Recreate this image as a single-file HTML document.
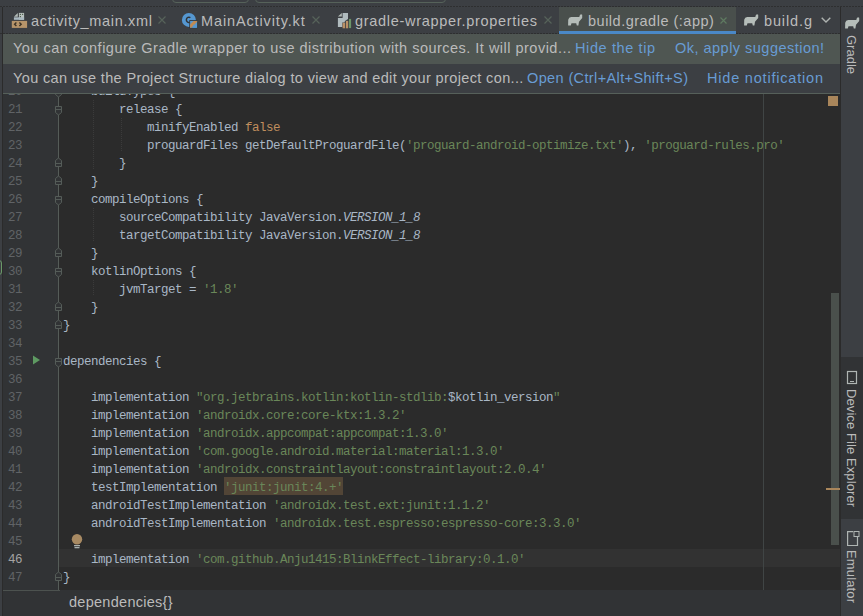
<!DOCTYPE html>
<html><head><meta charset="utf-8">
<style>
html,body{margin:0;padding:0;}
body{width:863px;height:616px;overflow:hidden;position:relative;background:#3C3F43;}
.a{position:absolute;}
.ui{position:absolute;font-family:"Liberation Sans",sans-serif;font-size:14.5px;white-space:pre;line-height:17px;color:#BBBBBB;}
.lk{color:#689CD4}
.code{position:absolute;left:63px;font-family:"Liberation Mono",monospace;font-size:12.5px;letter-spacing:-0.5px;line-height:18px;white-space:pre;color:#A9B7C6;}
.ln{position:absolute;left:0;width:22px;text-align:right;font-family:"Liberation Mono",monospace;font-size:12.5px;letter-spacing:-0.5px;line-height:18px;color:#606366;}
.k{color:#C08E5E}
.s{color:#6A8759}
.i{font-style:italic}
.vt{position:absolute;font-family:"Liberation Sans",sans-serif;font-size:13px;white-space:pre;line-height:15px;color:#BBBBBB;transform-origin:0 0;transform:rotate(90deg);}
svg{position:absolute;overflow:visible}
</style></head><body>

<div class="a" style="left:172px;top:-8px;width:75px;height:9px;border:1px solid #56625A;border-radius:4px"></div>
<div class="a" style="left:255px;top:-8px;width:189px;height:9px;border:1px solid #56625A;border-radius:4px"></div>
<div class="a" style="left:0;top:6px;width:863px;height:1px;background:repeating-linear-gradient(90deg,#2E2F30 0,#2E2F30 2px,transparent 2px,transparent 3px)"></div>
<div class="a" style="left:559px;top:7px;width:177px;height:24px;background:#494F4C"></div>
<div class="a" style="left:559px;top:31px;width:177px;height:3px;background:#4A88C7"></div>
<div class="a" style="left:0;top:33px;width:559px;height:1px;background:repeating-linear-gradient(90deg,#2E2F30 0,#2E2F30 2px,transparent 2px,transparent 3px)"></div>
<div class="a" style="left:736px;top:33px;width:104px;height:1px;background:repeating-linear-gradient(90deg,#2E2F30 0,#2E2F30 2px,transparent 2px,transparent 3px)"></div>
<div class="ui" style="left:31px;top:13px;letter-spacing:0.66px">activity_main.xml</div>
<div class="ui" style="left:201px;top:13px;letter-spacing:0.87px">MainActivity.kt</div>
<div class="ui" style="left:355px;top:13px;letter-spacing:0.70px">gradle-wrapper.properties</div>
<div class="ui" style="left:588px;top:13px;letter-spacing:0.5px">build.gradle (:app)</div>
<div class="ui" style="left:764px;top:13px;letter-spacing:0.87px">build.g</div>
<svg style="left:158px;top:16px" width="8" height="8"><path d="M0.5,0.5 L7.5,7.5 M7.5,0.5 L0.5,7.5" stroke="#56625A" stroke-width="1.2" fill="none"/></svg>
<svg style="left:312px;top:16px" width="8" height="8"><path d="M0.5,0.5 L7.5,7.5 M7.5,0.5 L0.5,7.5" stroke="#56625A" stroke-width="1.2" fill="none"/></svg>
<svg style="left:544px;top:16px" width="8" height="8"><path d="M0.5,0.5 L7.5,7.5 M7.5,0.5 L0.5,7.5" stroke="#56625A" stroke-width="1.2" fill="none"/></svg>
<svg style="left:720px;top:17px" width="7" height="7"><path d="M0.5,0.5 L6.5,6.5 M6.5,0.5 L0.5,6.5" stroke="#5E7A60" stroke-width="1.2" fill="none"/></svg>
<svg style="left:821px;top:17px" width="10" height="6"><path d="M0.7,0.7 L5,5 L9.3,0.7" stroke="#AEB3B0" stroke-width="1.4" fill="none"/></svg>
<svg style="left:11px;top:12px" width="17" height="17">
<path d="M2.9,4.8 L6.8,1 L6.8,4.8 Z" fill="#B3BCB8"/>
<rect x="7.9" y="0.9" width="5.2" height="6.9" fill="#B8C0BD"/>
<rect x="2.9" y="5.3" width="10.2" height="2.5" fill="#AAB8C0"/>
<rect x="8.8" y="1.8" width="1.2" height="1.2" fill="#50624F"/><rect x="11" y="1.8" width="1.2" height="1.2" fill="#50624F"/>
<rect x="8.8" y="4" width="1.2" height="1.2" fill="#50624F"/>
<rect x="0.8" y="8.9" width="15.3" height="7" fill="#B6946A"/>
<path d="M5.4,10.4 L3.6,12.2 L5.4,14 M8.4,10.4 L10.2,12.2 L8.4,14" stroke="#3E3426" stroke-width="1.4" fill="none"/>
</svg>
<svg style="left:181px;top:12px" width="17" height="17">
<circle cx="7.9" cy="7.9" r="7" fill="#5597D0"/>
<path d="M9.4,5.6 A2.6,2.6 0 1 0 8.6,10.3" stroke="#2F3236" stroke-width="1.5" fill="none"/>
<rect x="8.3" y="8.1" width="8" height="8.2" fill="#2F3236"/>
<path d="M9.1,8.9 L16.1,8.9 L16.1,15.8 L9.1,15.8 Z" fill="#5597D0"/>
<path d="M9.1,12.4 L12.6,8.9 L16.1,8.9 L16.1,9.8 L10.4,15.8 L9.1,15.8 Z" fill="#C08A52"/>
<path d="M12.8,12.4 L16.1,15.8 L11.2,15.8 Z" fill="#5597D0"/>
</svg>
<svg style="left:337px;top:12px" width="16" height="17">
<path d="M0.9,4.4 L4.8,0.9 L4.8,4.4 Z" fill="#B3BCB8"/>
<path d="M5.6,0.9 L11,0.9 L11,7 L8,9 L7.5,10.5 L5.3,10.5 L5.3,15.1 L0.9,15.1 L0.9,6 L5.6,6 Z" fill="#B0BBBE"/>
<rect x="5.6" y="10.8" width="2.5" height="5.5" fill="#B99066"/>
<rect x="8.9" y="8.9" width="2.3" height="7.4" fill="#B99066"/>
<rect x="12" y="6.9" width="2.1" height="9.2" fill="#6C9568"/>
</svg>
<svg style="left:567px;top:13px" width="16" height="13"><path d="M1.1,12.6 L1.2,6.8 Q1.8,4.2 4.2,4 L12.3,4 L12.9,2 L14,1.3 L15.2,1.8 L15.2,5 L12,8.8 L11.4,12.6 L9.8,12.6 L9.2,10.2 L4.5,10.2 L3.8,12.6 Z" fill="#B5BDB9"/></svg>
<svg style="left:743px;top:13px" width="16" height="13"><path d="M1.1,12.6 L1.2,6.8 Q1.8,4.2 4.2,4 L12.3,4 L12.9,2 L14,1.3 L15.2,1.8 L15.2,5 L12,8.8 L11.4,12.6 L9.8,12.6 L9.2,10.2 L4.5,10.2 L3.8,12.6 Z" fill="#B5BDB9"/></svg>
<div class="a" style="left:3px;top:34px;width:837px;height:30px;background:#4F5652"></div>
<div class="a" style="left:3px;top:64px;width:837px;height:29px;background:#3C3F43"></div>
<div class="a" style="left:3px;top:93px;width:837px;height:1px;background:#56605A"></div>
<div class="ui" style="left:13px;top:40px;letter-spacing:0.485px">You can configure Gradle wrapper to use distribution with sources. It will provid...</div>
<div class="ui lk" style="left:575px;top:40px;letter-spacing:0.61px">Hide the tip</div>
<div class="ui lk" style="left:675px;top:40px;letter-spacing:0.48px">Ok, apply suggestion!</div>
<div class="ui" style="left:13px;top:70px;letter-spacing:0.37px">You can use the Project Structure dialog to view and edit your project con...</div>
<div class="ui lk" style="left:527px;top:70px;letter-spacing:0.376px">Open (Ctrl+Alt+Shift+S)</div>
<div class="ui lk" style="left:707px;top:70px;letter-spacing:0.8px">Hide notification</div>
<div class="a" style="left:2px;top:7px;width:1px;height:609px;background:#2B2B2B"></div>
<div class="a" style="left:0;top:94px;width:840px;height:496px;overflow:hidden">
<div class="a" style="left:3px;top:0;width:55px;height:496px;background:#313335"></div>
<div class="a" style="left:59px;top:0;width:781px;height:496px;background:#2B2B2B"></div>
<div class="a" style="left:59px;top:455px;width:781px;height:18px;background:#323232"></div>
<div class="a" style="left:763px;top:0;width:1px;height:496px;background:#404545"></div>
<div class="a" style="left:93px;top:6px;width:0;height:69px;border-left:1px dotted #3B3B3B"></div>
<div class="a" style="left:121px;top:24px;width:0;height:33px;border-left:1px dotted #3B3B3B"></div>
<div class="a" style="left:93px;top:114px;width:0;height:33px;border-left:1px dotted #3B3B3B"></div>
<div class="a" style="left:93px;top:186px;width:0;height:15px;border-left:1px dotted #3B3B3B"></div>
<div class="a" style="left:224px;top:383px;width:119px;height:18px;background:#524536"></div>
<div class="code" style="top:-11px">    buildTypes {</div>
<div class="ln" style="top:-11px">20</div>
<div class="code" style="top:7px">        release {</div>
<div class="ln" style="top:7px">21</div>
<div class="code" style="top:25px">            minifyEnabled <span class="k">false</span></div>
<div class="ln" style="top:25px">22</div>
<div class="code" style="top:43px">            proguardFiles getDefaultProguardFile(<span class="s">&#x27;proguard-android-optimize.txt&#x27;</span>), <span class="s">&#x27;proguard-rules.pro&#x27;</span></div>
<div class="ln" style="top:43px">23</div>
<div class="code" style="top:61px">        }</div>
<div class="ln" style="top:61px">24</div>
<div class="code" style="top:79px">    }</div>
<div class="ln" style="top:79px">25</div>
<div class="code" style="top:97px">    compileOptions {</div>
<div class="ln" style="top:97px">26</div>
<div class="code" style="top:115px">        sourceCompatibility JavaVersion.<span class="i">VERSION_1_8</span></div>
<div class="ln" style="top:115px">27</div>
<div class="code" style="top:133px">        targetCompatibility JavaVersion.<span class="i">VERSION_1_8</span></div>
<div class="ln" style="top:133px">28</div>
<div class="code" style="top:151px">    }</div>
<div class="ln" style="top:151px">29</div>
<div class="code" style="top:169px">    kotlinOptions {</div>
<div class="ln" style="top:169px">30</div>
<div class="code" style="top:187px">        jvmTarget = <span class="s">&#x27;1.8&#x27;</span></div>
<div class="ln" style="top:187px">31</div>
<div class="code" style="top:205px">    }</div>
<div class="ln" style="top:205px">32</div>
<div class="code" style="top:223px">}</div>
<div class="ln" style="top:223px">33</div>
<div class="ln" style="top:241px">34</div>
<div class="code" style="top:259px">dependencies {</div>
<div class="ln" style="top:259px">35</div>
<div class="ln" style="top:277px">36</div>
<div class="code" style="top:295px">    implementation <span class="s">&quot;org.jetbrains.kotlin:kotlin-stdlib:</span>$kotlin_version<span class="s">&quot;</span></div>
<div class="ln" style="top:295px">37</div>
<div class="code" style="top:313px">    implementation <span class="s">&#x27;androidx.core:core-ktx:1.3.2&#x27;</span></div>
<div class="ln" style="top:313px">38</div>
<div class="code" style="top:331px">    implementation <span class="s">&#x27;androidx.appcompat:appcompat:1.3.0&#x27;</span></div>
<div class="ln" style="top:331px">39</div>
<div class="code" style="top:349px">    implementation <span class="s">&#x27;com.google.android.material:material:1.3.0&#x27;</span></div>
<div class="ln" style="top:349px">40</div>
<div class="code" style="top:367px">    implementation <span class="s">&#x27;androidx.constraintlayout:constraintlayout:2.0.4&#x27;</span></div>
<div class="ln" style="top:367px">41</div>
<div class="code" style="top:385px">    testImplementation <span class="s">&#x27;junit:junit:4.+&#x27;</span></div>
<div class="ln" style="top:385px">42</div>
<div class="code" style="top:403px">    androidTestImplementation <span class="s">&#x27;androidx.test.ext:junit:1.1.2&#x27;</span></div>
<div class="ln" style="top:403px">43</div>
<div class="code" style="top:421px">    androidTestImplementation <span class="s">&#x27;androidx.test.espresso:espresso-core:3.3.0&#x27;</span></div>
<div class="ln" style="top:421px">44</div>
<div class="ln" style="top:439px">45</div>
<div class="code" style="top:457px">    implementation <span class="s">&#x27;com.github.Anju1415:BlinkEffect-library:0.1.0&#x27;</span></div>
<div class="ln" style="top:457px;color:#A4A3A3">46</div>
<div class="code" style="top:475px">}</div>
<div class="ln" style="top:475px">47</div>
<svg style="left:0;top:0" width="70" height="496"><rect x="58" y="0" width="1" height="496" fill="#555C58"/><path d="M55.5,-5.5 L61.5,-5.5 L61.5,0.5 L58.5,3 L55.5,0.5 Z M55.5,-2.5 L61.5,-2.5" fill="#313335" stroke="#555C58" stroke-width="1"/><path d="M55.5,12.5 L61.5,12.5 L61.5,18.5 L58.5,21 L55.5,18.5 Z M55.5,15.5 L61.5,15.5" fill="#313335" stroke="#555C58" stroke-width="1"/><path d="M55.5,102.5 L61.5,102.5 L61.5,108.5 L58.5,111 L55.5,108.5 Z M55.5,105.5 L61.5,105.5" fill="#313335" stroke="#555C58" stroke-width="1"/><path d="M55.5,174.5 L61.5,174.5 L61.5,180.5 L58.5,183 L55.5,180.5 Z M55.5,177.5 L61.5,177.5" fill="#313335" stroke="#555C58" stroke-width="1"/><path d="M55.5,264.5 L61.5,264.5 L61.5,270.5 L58.5,273 L55.5,270.5 Z M55.5,267.5 L61.5,267.5" fill="#313335" stroke="#555C58" stroke-width="1"/><path d="M58.5,64 L61.5,66.5 L61.5,72.5 L55.5,72.5 L55.5,66.5 Z M55.5,69.5 L61.5,69.5" fill="#313335" stroke="#555C58" stroke-width="1"/><path d="M58.5,82 L61.5,84.5 L61.5,90.5 L55.5,90.5 L55.5,84.5 Z M55.5,87.5 L61.5,87.5" fill="#313335" stroke="#555C58" stroke-width="1"/><path d="M58.5,154 L61.5,156.5 L61.5,162.5 L55.5,162.5 L55.5,156.5 Z M55.5,159.5 L61.5,159.5" fill="#313335" stroke="#555C58" stroke-width="1"/><path d="M58.5,208 L61.5,210.5 L61.5,216.5 L55.5,216.5 L55.5,210.5 Z M55.5,213.5 L61.5,213.5" fill="#313335" stroke="#555C58" stroke-width="1"/><path d="M58.5,226 L61.5,228.5 L61.5,234.5 L55.5,234.5 L55.5,228.5 Z M55.5,231.5 L61.5,231.5" fill="#313335" stroke="#555C58" stroke-width="1"/><path d="M58.5,478 L61.5,480.5 L61.5,486.5 L55.5,486.5 L55.5,480.5 Z M55.5,483.5 L61.5,483.5" fill="#313335" stroke="#555C58" stroke-width="1"/><path d="M33,261.5 L40,266 L33,270.5 Z" fill="#5E9A62"/><circle cx="77" cy="445.3" r="5.2" fill="#A88A63"/><rect x="74" y="451" width="6" height="1.3" fill="#A9B0AE"/><rect x="74.5" y="453" width="5" height="1.3" fill="#A9B0AE"/></svg>
<div class="a" style="left:831px;top:199px;width:8px;height:252px;background:#4A504C"></div>
<div class="a" style="left:828px;top:2px;width:10px;height:10px;background:#A9865B"></div>
<div class="a" style="left:826px;top:394px;width:14px;height:2px;background:#A9865B"></div>
</div>
<div class="a" style="left:3px;top:590px;width:837px;height:26px;background:#313335"></div>
<div class="a" style="left:3px;top:590px;width:57px;height:1px;background:#4C524F"></div>
<div class="a" style="left:-6px;top:260px;width:6px;height:13px;border:1px solid #6A9A68;border-radius:3px"></div>
<div class="ui" style="left:69px;top:594px;letter-spacing:0.277px">dependencies{}</div>
<div class="a" style="left:840px;top:7px;width:1px;height:609px;background:#2B2B2B"></div>
<div class="a" style="left:841px;top:357px;width:22px;height:162px;background:#313335"></div>
<svg style="left:844px;top:16px" width="16" height="13"><path d="M1.1,12.6 L1.2,6.8 Q1.8,4.2 4.2,4 L12.3,4 L12.9,2 L14,1.3 L15.2,1.8 L15.2,5 L12,8.8 L11.4,12.6 L9.8,12.6 L9.2,10.2 L4.5,10.2 L3.8,12.6 Z" fill="#B5BDB9"/></svg>
<div class="vt" style="left:859px;top:35px;letter-spacing:0px">Gradle</div>
<svg style="left:847px;top:371px" width="10" height="14"><rect x="0.5" y="0.5" width="9" height="12" fill="none" stroke="#AFB5B3" stroke-width="1.2"/><rect x="3" y="10" width="4" height="1" fill="#AFB5B3"/></svg>
<div class="vt" style="left:859px;top:389px;letter-spacing:0.09px">Device File Explorer</div>
<svg style="left:847px;top:531px" width="13" height="15"><path d="M10.5,6 L10.5,14.5 L0.6,14.5 L0.6,0.6 L6,0.6" fill="none" stroke="#AFB5B3" stroke-width="1.2"/><rect x="7" y="0.5" width="5" height="5" fill="none" stroke="#AFB5B3" stroke-width="1"/></svg>
<div class="vt" style="left:859px;top:550px;letter-spacing:0.15px">Emulator</div>
</body></html>
